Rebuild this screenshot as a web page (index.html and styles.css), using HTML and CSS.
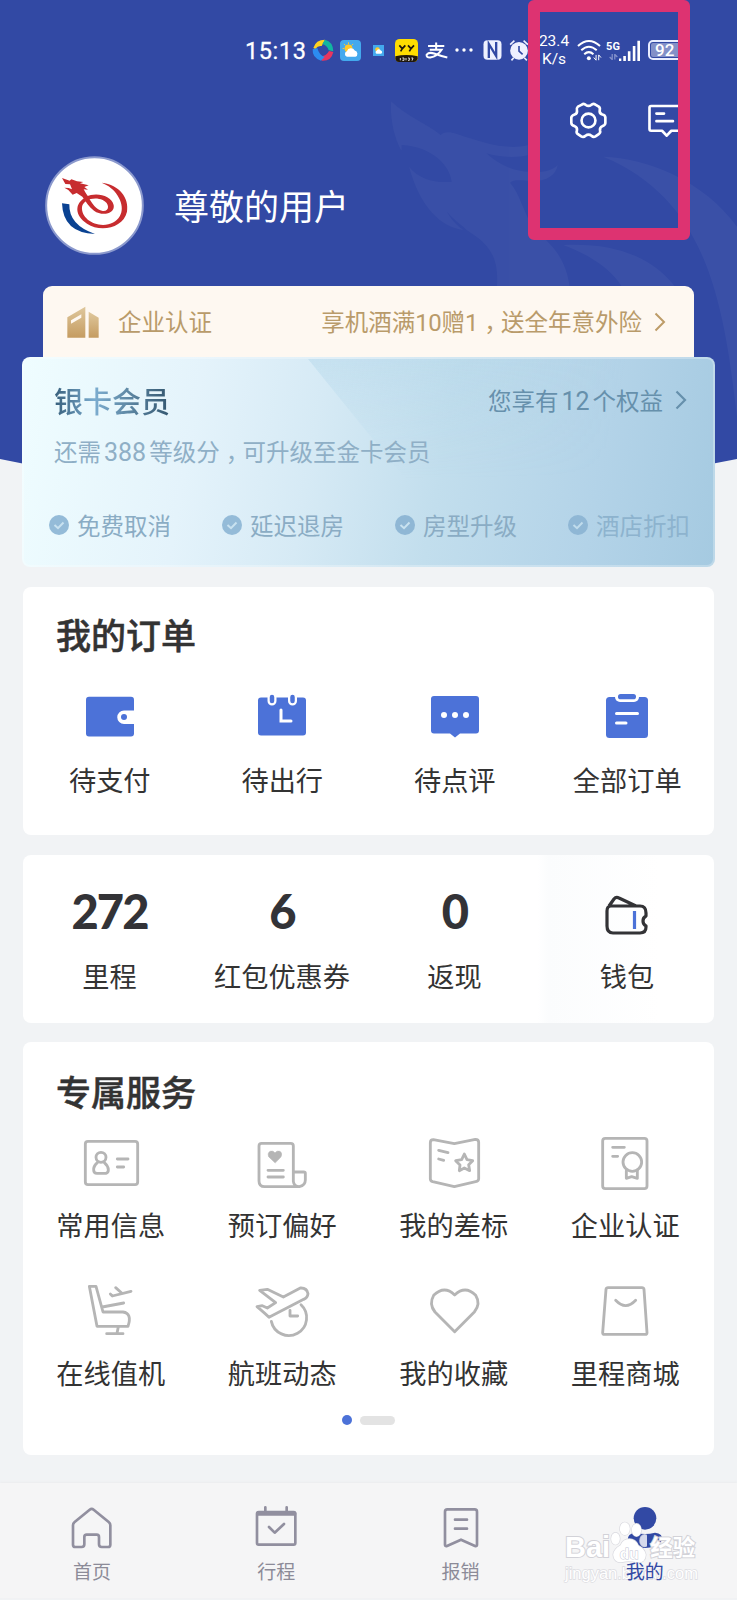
FILE: index.html
```html
<!DOCTYPE html>
<html lang="zh-CN">
<head>
<meta charset="utf-8">
<title>我的</title>
<link rel="stylesheet" href="styles.css">
</head>
<body>
<div class="page">
  <svg class="hero-bg" viewBox="0 0 737 520" width="737" height="520">
    <path d="M0 0H737V459Q368 536 0 459Z" fill="#3249a4"/>
    <g fill="#fff" opacity=".035" transform="translate(230 0) scale(.33333)">
      <path d="M483 304C530 350 590 370 632 405C650 388 680 402 710 412C770 430 830 450 893 436V466C850 475 800 470 770 460C800 490 850 515 900 515C940 520 970 510 983 495C978 530 940 548 893 542C860 540 850 540 840 548C870 580 880 640 915 690C960 730 1010 770 1020 870H800C810 760 770 730 710 690C690 670 640 640 630 595C650 640 670 670 700 690C630 680 570 620 537 500C570 540 620 550 665 545C660 500 610 440 515 435C515 450 515 450 514 452C490 410 480 350 483 304Z"/>
      <path d="M1120 470C1250 475 1420 540 1521 680V1250C1480 900 1430 600 1120 470Z"/>
      <path d="M1000 735C1200 725 1330 800 1390 960H1210C1200 850 1120 780 1000 735Z"/>
    </g>
  </svg>

  <header class="hero">
    <div class="status">
      <span class="time">15:13</span>
      <svg class="s-ball" viewBox="245 119 66 66" width="22" height="22"><path d="M249 146Q256 121 284 121L274 140Q262 138 255 149Z" fill="#ffd21f"/><path d="M284 121Q308 127 309 156L295 153Q292 139 276 134Z" fill="#12b5a0"/><path d="M309 158Q303 186 274 184L271 170Q287 172 296 155Z" fill="#e8355f"/><path d="M247 150Q245 176 272 184L283 173Q266 167 261 146Z" fill="#2c8cf0"/></svg>
      <svg class="s-weather" viewBox="0 0 64 64" width="21" height="21"><rect width="64" height="64" rx="12" fill="#43a9ee"/><circle cx="26" cy="26" r="12" fill="#ffc928"/><path d="M26 7v6M8 26h5M12 12l4 4M40 12l-4 4" stroke="#ffc928" stroke-width="3"/><path d="M21 51a9 9 0 0 1 0-17a13 13 0 0 1 24-2a10 10 0 0 1 2 19Z" fill="#fff"/></svg>
      <svg class="s-mini" viewBox="0 0 64 64" width="11" height="11"><rect width="64" height="64" fill="#43a9ee"/><circle cx="26" cy="26" r="13" fill="#ffc928"/><path d="M21 51a9 9 0 0 1 0-17a13 13 0 0 1 24-2a10 10 0 0 1 2 19Z" fill="#fff"/></svg>
      <svg class="s-yy" viewBox="0 0 69 69" width="23" height="23"><rect width="69" height="69" rx="14" fill="#fd0"/><path d="M1 52Q34 44 68 52V58Q66 69 56 69H12Q2 69 1 58Z" fill="#20180c"/><path d="M13 19l9 10l9-10M22 29l-5 8M39 19l9 10l9-10M48 29l-5 8" fill="none" stroke="#20180c" stroke-width="5"/><path d="M16 57v7M22 57h5v7h-5M33 57v7M39 57h4v7h-4M49 57h5l-3 8" fill="none" stroke="#fff" stroke-width="2.500"/></svg>
      <svg class="s-pay" viewBox="583 126 68 50" width="23" height="17"><path d="M592 138H640M616 127V150M597 149H632Q620 168 598 172Q586 171 588 163Q595 155 610 160Q632 168 649 172" fill="none" stroke="#fff" stroke-width="6"/></svg>
      <svg class="s-dots" viewBox="0 0 18 4" width="18" height="4"><circle cx="2" cy="2" r="1.700" fill="#fff"/><circle cx="9" cy="2" r="1.700" fill="#fff"/><circle cx="16" cy="2" r="1.700" fill="#fff"/></svg>
      <svg class="s-nfc" viewBox="760 122 56 60" width="19" height="20"><rect x="761" y="123" width="54" height="58" rx="12" fill="#eef1ff"/><path d="M777 176V134L799 170V128" fill="none" stroke="#3249a4" stroke-width="7"/></svg>
      <svg class="s-alarm" viewBox="838 119 60 64" width="20" height="21"><circle cx="868" cy="152" r="27" fill="#eef1ff"/><path d="M841 133L854 121M882 121L895 133M852 173L845 181M884 173L892 181" stroke="#eef1ff" stroke-width="5"/><path d="M868 137V153L879 163" fill="none" stroke="#3249a4" stroke-width="5"/></svg>
      <span class="speed"><span>23.4</span><span>K/s</span></span>
      <svg class="s-wifi" viewBox="1040 116 76 66" width="25" height="22"><g fill="none" stroke="#fff" stroke-width="6"><path d="M1043 137Q1076 106 1110 137"/><path d="M1053 150Q1076 128 1100 150"/><path d="M1062 162Q1076 149 1090 162"/></g><circle cx="1076" cy="174" r="6" fill="#fff"/><path d="M1098 164V180L1091 172M1106 180V164L1113 172" fill="none" stroke="#fff" stroke-width="3"/></svg>
      <span class="fiveg"><span>5G</span><svg viewBox="0 0 28 18" width="9" height="6"><path d="M10 0V17L2 9M18 17V1L26 9" fill="none" stroke="#8491cb" stroke-width="4"/></svg></span>
      <svg class="s-signal" viewBox="1165 117 64 64" width="21" height="21"><path d="M1168 173V181M1182 166V181M1196 151V181M1211 135V181M1225 119V181" stroke="#fff" stroke-width="8"/></svg>
      <span class="battery">92</span>
    </div>
    <div class="tools">
      <svg viewBox="1014 304 118 116" width="39" height="39" fill="none" stroke="#fff" stroke-width="8" stroke-linejoin="round"><path d="M1053 314Q1059 309 1065 315Q1073 321 1081 315Q1087 309 1094 314L1104 320Q1109 324 1107 330Q1105 341 1115 344Q1123 346 1124 352V370Q1123 377 1115 379Q1106 383 1108 393Q1110 399 1104 403L1094 410Q1088 414 1082 408Q1073 401 1064 408Q1058 414 1051 410L1041 403Q1035 399 1038 392Q1040 383 1031 379Q1021 377 1021 369V353Q1022 347 1031 344Q1040 341 1038 331Q1036 325 1041 320Z"/><circle cx="1073" cy="362" r="21"/></svg>
      <svg viewBox="1250 306 120 112" width="40" height="37" fill="none" stroke="#fff" stroke-width="8" stroke-linejoin="round" stroke-linecap="round"><path d="M1262 318H1357V393H1323L1309 408L1295 393H1262Q1257 393 1257 388V323Q1257 318 1262 318ZM1278 341H1301M1278 364H1328"/></svg>
    </div>
    <div class="user">
      <svg class="avatar" viewBox="136 77 297 297" width="99" height="99">
        <circle cx="284.500" cy="225.500" r="145" fill="#fff" stroke="#8b99cd" stroke-width="6"/>
        <path d="M187 219L209 222Q207 284 286 311Q190 308 187 219Z" fill="#0a4292"/>
        <path d="M306 157C360 164 389 203 382 244C371 293 303 307 262 280C225 256 223 219 259 200C289 184 335 196 342 224C347 250 308 259 283 241C267 229 258 213 248 199L231 188L219 193L206 179L194 172L207 173L217 177L211 162L197 161L187 143L210 151L215 147L232 153L251 155L241 159L267 165L254 170L265 178L252 177C257 186 259 190 263 195C278 222 289 238 309 242C330 244 331 219 309 209C285 198 251 207 247 230C244 264 286 291 326 282C370 269 376 230 354 196C343 178 328 166 306 157Z" fill="#c72c2f"/>
      </svg>
      <h1>尊敬的用户</h1>
    </div>
  </header>

  <section class="verify">
    <svg viewBox="200 526 96 96" width="32" height="32"><defs><linearGradient id="gold" x2="0" y2="1"><stop stop-color="#dfc89d"/><stop offset="1" stop-color="#c59c61"/></linearGradient></defs><path d="M201 560L255 528V621H201ZM212 579L243 561V551L212 569Z" fill="url(#gold)" fill-rule="evenodd"/><path d="M265 543L295 561V621H265Z" fill="url(#gold)"/></svg>
    <span class="verify-name">企业认证</span>
    <span class="verify-promo">享机酒满<b>10</b>赠<b>1</b><i class="comma">，</i>送全年意外险</span>
    <svg class="chev" viewBox="0 0 12 20" width="12" height="20"><path d="M1.500 1.500L10 10L1.500 18.500" fill="none" stroke="#bd9c68" stroke-width="2"/></svg>
  </section>

  <section class="member">
    <div class="member-head">
      <h2>银卡会员</h2>
      <span class="rights">您享有<b>12</b>个权益</span>
      <svg class="chev" viewBox="0 0 12 20" width="12" height="20"><path d="M1.500 1.500L10 10L1.500 18.500" fill="none" stroke="#6690ac" stroke-width="2.200"/></svg>
    </div>
    <p class="upgrade">还需<b>388</b>等级分<i class="comma">，</i>可升级至金卡会员</p>
    <ul class="perks">
      <li><svg viewBox="0 0 20 20" width="20" height="20"><circle cx="10" cy="10" r="10" fill="#94bbd8"/><path d="M5.500 10L9 13.200L14.500 7.500" fill="none" stroke="#c9e2f0" stroke-width="2"/></svg>免费取消</li>
      <li><svg viewBox="0 0 20 20" width="20" height="20"><circle cx="10" cy="10" r="10" fill="#94bbd8"/><path d="M5.500 10L9 13.200L14.500 7.500" fill="none" stroke="#c9e2f0" stroke-width="2"/></svg>延迟退房</li>
      <li><svg viewBox="0 0 20 20" width="20" height="20"><circle cx="10" cy="10" r="10" fill="#8fb7d5"/><path d="M5.500 10L9 13.200L14.500 7.500" fill="none" stroke="#c9e2f0" stroke-width="2"/></svg>房型升级</li>
      <li class="dim"><svg viewBox="0 0 20 20" width="20" height="20"><circle cx="10" cy="10" r="10" fill="#8fb7d5"/><path d="M5.500 10L9 13.200L14.500 7.500" fill="none" stroke="#c0dcec" stroke-width="2"/></svg>酒店折扣</li>
    </ul>
  </section>

  <section class="card orders">
    <h2>我的订单</h2>
    <div class="cols">
      <a><svg viewBox="-30 -30 60 60" width="60" height="60"><path d="M-21-19.300H21Q24-19.300 24-16V-5.500H14A6.500 6.500 0 0 0 14 8H24V17.500Q24 20.500 21 20.500H-21Q-24 20.500-24 17.500V-16Q-24-19.300-21-19.300Z" fill="#4c72d8"/><circle cx="14" cy="1" r="3" fill="#4c72d8"/></svg>待支付</a>
      <a><svg viewBox="-30 -30 60 60" width="60" height="60"><rect x="-24" y="-18.500" width="48" height="38" rx="3" fill="#4c72d8"/><path d="M-10-18.500V-15M10.500-18.500V-15" stroke="#fff" stroke-width="9" stroke-linecap="round"/><path d="M-10-19V-15M10.500-19V-15" stroke="#4c72d8" stroke-width="4.500" stroke-linecap="round"/><path d="M-1-6V5H9" fill="none" stroke="#fff" stroke-width="3" stroke-linecap="round"/></svg>待出行</a>
      <a><svg viewBox="-30 -30 60 60" width="60" height="60"><path d="M-21-20H21Q24-20 24-17V14.500Q24 17.500 21 17.500H5L0 21.500L-5 17.500H-21Q-24 17.500-24 14.500V-17Q-24-20-21-20Z" fill="#4c72d8"/><circle cx="-11" cy="-1" r="3" fill="#fff"/><circle cy="-1" r="3" fill="#fff"/><circle cx="11" cy="-1" r="3" fill="#fff"/></svg>待点评</a>
      <a><svg viewBox="-30 -30 60 60" width="60" height="60"><rect x="-21" y="-19" width="42" height="41" rx="3.500" fill="#4c72d8"/><rect x="-12" y="-24" width="24" height="10" rx="5" fill="#fff"/><rect x="-9" y="-22" width="18" height="5.300" rx="2.600" fill="#4c72d8"/><path d="M-10.500-2.500H10.500M-10.500 7H-1" stroke="#fff" stroke-width="3" stroke-linecap="round"/></svg>全部订单</a>
    </div>
  </section>

  <section class="card stats">
    <a><strong>272</strong>里程</a>
    <a><strong>6</strong>红包优惠券</a>
    <a><strong>0</strong>返现</a>
    <a class="wallet"><span class="wallet-icon"><svg viewBox="604 894 46 44" width="46" height="44" fill="none" stroke="#333336" stroke-width="3.200" stroke-linejoin="round"><path d="M611 907H640Q646 907 646 914V917C642 919 642 925 646 927V928Q646 934 640 934H613Q607 934 607 927V912Q607 907 611 907M609 907L614 900Q616 897.500 619 899L636 907"/><path d="M634.500 912V930" stroke="#4c72d8"/></svg></span>钱包</a>
  </section>

  <section class="card services">
    <h2>专属服务</h2>
    <div class="grid">
      <a><svg viewBox="147 63 192 192" width="64" height="64"><rect x="166" y="94" width="157" height="130" rx="8"/><circle cx="213" cy="142" r="15"/><path d="M202 158Q190 169 191 180Q191 190 201 190H228Q235 188 235 180Q235 168 223 158M262 147H294M262 171H281"/></svg>常用信息</a>
      <a><svg viewBox="661 63 192 192" width="64" height="64"><path d="M808 230H705Q688 230 688 213V108Q688 100 696 100H783Q791 100 791 108V214Q793 230 809 230Q827 226 827 210V190Q827 186 822 186H792M715 181H761M715 201H761"/><path d="M736 158L717 140Q713 128 722 124Q730 121 736 129Q742 121 750 124Q759 128 754 140Z" fill="#b5b5b5" stroke-width="2"/></svg>预订偏好</a>
      <a><svg viewBox="156 63 192 192" width="64" height="64"><path d="M190 89L253 101L316 88Q326 88 326 97V206Q326 213 317 215L253 230L188 215Q181 213 181 206V98Q181 89 190 89ZM206 121L234 128M206 147L221 151M283 132L291 149L308 152L296 164L299 182L283 174L268 182L270 165L257 152L275 149Z"/></svg>我的差标</a>
      <a><svg viewBox="670 63 192 192" width="64" height="64"><rect x="699" y="85" width="133" height="151" rx="8"/><circle cx="788" cy="156" r="28"/><path d="M729 112H764M729 139H744M770 182V205L786 200L803 205V182"/></svg>企业认证</a>
      <a><svg viewBox="147 57 192 192" width="64" height="64"><path d="M178 79H198L219 156H279Q307 160 294 199H201ZM217 141L281 129M265 200L261 220M230 221H279M241 102L247 108L303 94M257 83L275 99"/></svg>在线值机</a>
      <a><svg viewBox="661 57 192 192" width="64" height="64"><path d="M682 140L698 137L713 144L738 128L690 91L713 88L761 111L812 84Q832 83 835 101Q834 113 822 118L718 172Q707 161 682 140ZM725 184A53.500 53.500 0 1 0 814 134M781 151V168H804"/></svg>航班动态</a>
      <a><svg viewBox="156 57 192 192" width="64" height="64"><path d="M254 215L195 156Q176 132 191 106Q223 75 254 105Q286 75 317 106Q333 132 313 156Z"/></svg>我的收藏</a>
      <a><svg viewBox="670 57 192 192" width="64" height="64"><path d="M715 83H817Q822 83 823 88L832 218Q832 223 827 223H704Q699 223 699 218L709 88Q710 83 715 83ZM738 121Q768 153 798 121"/></svg>里程商城</a>
    </div>
    <div class="pager"><span class="dot"></span><span class="pill"></span></div>
  </section>

  <div class="watermark">
    <div class="wm-brand"><span>Bai</span><svg viewBox="728 208 110 126" width="37" height="42"><g fill="#fff" stroke="#d9d9df" stroke-width="4"><ellipse cx="744" cy="261" rx="13" ry="18"/><ellipse cx="772" cy="231" rx="15" ry="19"/><ellipse cx="807" cy="235" rx="14" ry="19"/><ellipse cx="831" cy="267" rx="14" ry="18" opacity=".8"/><path d="M785 262Q767 262 759 281Q739 292 737 309Q740 336 765 331Q785 326 808 332Q834 334 835 309Q831 290 813 282Q804 262 785 262Z"/></g><text x="757" y="322" class="wm-du">du</text></svg><span class="wm-cn">经验</span></div>
    <div class="wm-url">jingyan.baidu.com</div>
  </div>

  <nav class="tabs">
    <a><svg viewBox="211 165 132 132" width="44" height="44"><path d="M270 179Q276 174 282 179L328 217Q332 220 332 226V284Q332 291 325 291H306Q298 291 298 283V261Q298 254 291 254H261Q254 254 254 261V283Q254 291 246 291H227Q220 291 220 284V226Q220 220 224 217Z"/></svg>首页</a>
    <a><svg viewBox="762 165 132 132" width="44" height="44"><rect x="771" y="186" width="115" height="98" rx="5"/><path d="M774 191H883" stroke-width="12"/><path d="M796 172V186M860 172V186M807 231L824 248L852 222"/></svg>行程</a>
    <a><svg viewBox="214 165 132 132" width="44" height="44"><path d="M239 178H321Q328 178 328 185V284Q328 290 322 288L280 269L238 288Q232 290 232 284V185Q232 178 239 178ZM262 209H298M262 236H298"/></svg>报销</a>
    <a class="active"><svg viewBox="767 165 132 132" width="44" height="44"><circle cx="833" cy="205" r="34"/><path d="M781 271Q780 250 804 248Q833 256 863 248Q887 250 885 271Q865 294 833 294Q801 294 781 271Z"/></svg><span class="tab-label">我的</span></a>
  </nav>

  <div class="marker"></div>
</div>
</body>
</html>
```
FILE: styles.css
```css
* { box-sizing: border-box; }
body {
  margin: 0;
  background: #f1f3f5;
  font-family: "Noto Sans CJK SC", sans-serif;
  color: #333;
}
h1, h2, p, ul { margin: 0; padding: 0; font-weight: 400; }
ul { list-style: none; }
svg { display: block; flex: none; }
.page { position: relative; width: 737px; height: 1600px; overflow: hidden; display: flex; flex-direction: column; }
.hero-bg { position: absolute; left: 0; top: 0; }
.hero, .verify, .member { position: relative; }

/* header */
.hero { height: 286px; flex: none; color: #fff; }
.status { display: flex; align-items: center; height: 100px; padding-left: 245px; }
.time { font: 400 23.500px/24px Roboto, sans-serif; letter-spacing: .6px; width: 67px; white-space: nowrap; padding-top: 1px; -webkit-text-stroke: .3px #fff; }
.s-weather { margin-left: 6px; }
.s-mini { margin-left: 12px; }
.s-yy { margin-left: 11px; }
.s-pay { margin-left: 7px; }
.s-dots { margin-left: 7px; }
.s-nfc { margin-left: 10px; }
.s-alarm { margin-left: 7px; }
.speed { display: flex; flex-direction: column; align-items: center; width: 32px; margin-left: 9px; font: 400 15.500px/18px Roboto, sans-serif; }
.s-wifi { margin-left: 7px; }
.fiveg { display: flex; flex-direction: column; align-items: center; width: 14px; margin-left: 4px; font: 700 11px/12px Roboto, sans-serif; gap: 1px; }
.s-signal { margin-left: -1px; }
.battery { width: 36px; height: 20px; margin-left: 8px; border: 2px solid #e9edff; border-radius: 5px; background: #8390c8; background-clip: content-box; padding: 1px; font: 500 17px/14px Roboto, sans-serif; text-indent: 4px; }
.tools { display: flex; align-items: center; justify-content: flex-end; gap: 39px; height: 40px; padding-right: 50px; }
.user { display: flex; align-items: center; padding: 16px 0 0 45px; gap: 30px; }
h1 { font-size: 35px; line-height: 48px; padding-bottom: 2px; }

.verify { display: flex; align-items: center; height: 72px; margin: 0 43px; padding: 0 28px 0 24px; border-radius: 9px 9px 0 0; background: #fef8f1; color: #b99b6a; font-size: 23.500px; line-height: 32px; }
.verify span { padding-bottom: 2px; }
.verify-name { margin-left: 19px; }
.verify-promo { margin-left: auto; }
.verify .chev { margin-left: 12px; }
b { font: 400 25px/1 Roboto, sans-serif; }
.verify b { font-size: 24px; letter-spacing: -.3px; }
.comma { font-style: normal; font-feature-settings: "halt"; padding: 0 5px 0 6px; }

/* membership */
.member {
  height: 210px; margin: -1px 22px 0 22px; padding: 21px 20px 0 32px; border-radius: 8px;
  border: 2px solid #ffffff44;
  background: linear-gradient(100deg, #effdff 0%, #e4f3fb 25%, #d6eaf5 42%, #c2deed 60%, #b3d3e8 82%, #a5cae1 100%) border-box;
}
.member::before {
  content: ""; position: absolute; left: 284px; top: 0; right: 0; height: 120px;
  background: linear-gradient(100deg, #9ccbe44a, transparent 75%);
  -webkit-mask-image: linear-gradient(#000, transparent);
  mask-image: linear-gradient(#000, transparent);
  clip-path: polygon(0 0, 100% 0, 100% 100%, 97px 100%);
}
.member > * { position: relative; }
.member-head { display: flex; align-items: center; height: 40px; margin-left: -2px; color: #6690ac; font-size: 23.500px; }
.member h2 { font-size: 29px; font-weight: 500; line-height: 40px; background: linear-gradient(90deg, #375f7b, #7baccf 35%, #638daa 60%, #345770); background-clip: text; color: transparent; }
.rights { margin-left: auto; }
.member b { padding: 0 3px; }
.member-head .chev { margin: 0 6px 0 12px; }
.upgrade { margin-left: -2px; color: #8fafc6; font-size: 23.500px; line-height: 34px; padding-top: 14px; }
.perks { display: grid; grid-template-columns: repeat(4, 173px); margin: 40px 0 0 -7px; color: #8aacc4; font-size: 23.500px; line-height: 34px; }
.perks li { display: flex; align-items: center; gap: 8px; }
.dim { color: #8db3ce; }

/* white cards */
.card { flex: none; margin: 0 23px; background: #fff; border-radius: 8px; }
.card h2 { font-size: 35px; font-weight: 500; line-height: 50px; padding-left: 33px; -webkit-text-stroke: .5px #333; }
.card a { display: flex; flex-direction: column; align-items: center; font-size: 27.200px; line-height: 38px; white-space: nowrap; }
.orders { height: 248px; margin-top: 20px; padding-top: 22px; }
.cols, .stats { display: grid; grid-template-columns: repeat(4, 172.500px); }
.cols { padding: 27px 0 0 .5px; }
.cols a { gap: 14px; }
.stats { height: 168px; margin-top: 20px; background: linear-gradient(90deg, #fff 74.500%, #fbfcfd 76%, #fff 92%); }
.stats a { padding-top: 27px; gap: 16px; padding-left: .5px; }
.stats strong, .wallet-icon { height: 58px; display: flex; align-items: center; }
.stats strong { font: 900 47px/58px Lato, sans-serif; letter-spacing: -2px; color: #333337; }
.wallet-icon { padding-top: 8px; }
.services { height: 413px; margin-top: 19px; padding-top: 24px; }
.grid { display: grid; grid-template-columns: repeat(4, 171.500px); grid-auto-rows: 148px; padding: 15px 0 0 2px; }
.grid a { gap: 10px; }
.grid svg { fill: none; stroke: #b5b5b5; stroke-width: 8.500; stroke-linecap: round; stroke-linejoin: round; }
.pager { display: flex; align-items: center; justify-content: center; gap: 8px; margin-top: -12px; height: 10px; padding-right: 1px; }
.dot { width: 10px; height: 10px; border-radius: 50%; background: #4c72d8; }
.pill { width: 35px; height: 9px; border-radius: 5px; background: #e3e3e3; }

.tabs { display: grid; grid-template-columns: repeat(4, 1fr); flex: none; height: 115px; margin-top: 28px; padding-top: 22px; background: #f5f5f6; box-shadow: 0 -1px 2px #ebecee; }
.tabs a { display: flex; flex-direction: column; align-items: center; gap: 8px; font-size: 19px; line-height: 28px; color: #8c8b98; }
.tabs svg { fill: none; stroke: #918f9f; stroke-width: 8; stroke-linecap: round; stroke-linejoin: round; }
.tabs .active { color: #3249a4; }
.tabs .active svg { fill: #3249a4; stroke: none; }
.tab-label { position: relative; z-index: 2; }

/* overlays */
.watermark { position: absolute; z-index: 1; left: 565px; top: 1519px; width: 135px; color: #fff; font-family: "Liberation Sans", sans-serif; }
.wm-brand { display: flex; align-items: flex-end; height: 44px; font-size: 29px; line-height: 32px; font-weight: 700; -webkit-text-stroke: 2px #d2d2d8; paint-order: stroke fill; }
.wm-du { font: 700 46px "Liberation Sans", sans-serif; fill: #fff; stroke: #c4c6d4; stroke-width: 3; -webkit-text-stroke: 3px #c4c6d4; }
.wm-cn { font: 700 22.500px/34px "Noto Sans CJK SC", sans-serif; margin-left: 3px; }
.wm-url { font-size: 16.500px; line-height: 20px; -webkit-text-stroke: 1.400px #dcdce1; paint-order: stroke fill; }
.marker { position: absolute; left: 528px; top: 0; width: 162px; height: 240px; border: 12px solid #dd3371; border-radius: 6px; }
```
